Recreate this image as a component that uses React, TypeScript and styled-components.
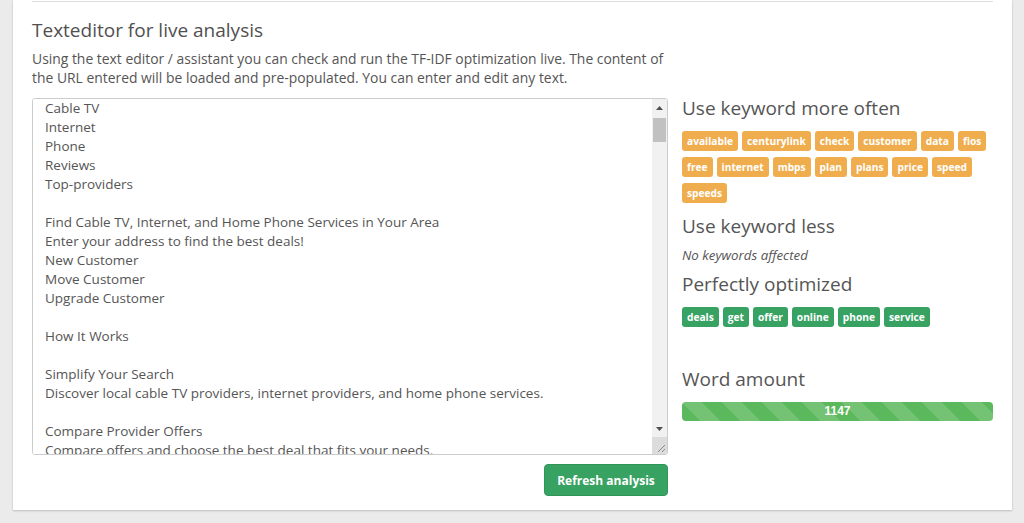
import React from 'react';
import styled, { createGlobalStyle } from 'styled-components';

const GlobalStyle = createGlobalStyle`
    html, body {
        margin: 0;
        padding: 0;
        background: #ebebeb;
        font-family: 'Open Sans', 'Noto Sans', sans-serif;
        color: #555;
    }
`;

const moreOften = ['available', 'centurylink', 'check', 'customer', 'data', 'fios', 'free', 'internet', 'mbps', 'plan', 'plans', 'price', 'speed', 'speeds'];
const optimized = ['deals', 'get', 'offer', 'online', 'phone', 'service'];

const baseText = [
    'Cable TV',
    'Internet',
    'Phone',
    'Reviews',
    'Top-providers',
    '',
    'Find Cable TV, Internet, and Home Phone Services in Your Area',
    'Enter your address to find the best deals!',
    'New Customer',
    'Move Customer',
    'Upgrade Customer',
    '',
    'How It Works',
    '',
    'Simplify Your Search',
    'Discover local cable TV providers, internet providers, and home phone services.',
    '',
    'Compare Provider Offers',
    'Compare offers and choose the best deal that fits your needs.',
    '',
    'Get Connected',
    'Order online or call to get your new service installed.',
    '',
];

const extra: string[] = [];
for (let i = 0; i < 10; i++) {
    extra.push(
        'Popular Internet Plans',
        'CenturyLink Internet - speeds up to 100 Mbps',
        'Fios Internet - plans with no data caps',
        'Check availability at your address',
        'Free installation for new customers',
        '',
        'Frequently Asked Questions',
        'What is the best internet plan for me?',
        'Compare price and speed of available plans.',
        'How do I check which providers offer service in my area?',
        'Enter your zip code and see every available offer online.',
        '',
        'Customer Reviews',
        'Read real reviews from customers in your neighborhood.',
        'Phone service bundles and deals',
        '',
        '',
    );
}

const editorText = [...baseText, ...extra].join('\n');

const Arrow = ({ dir }: { dir: 'up' | 'down' }) => (
    <svg width='7' height='4' viewBox='0 0 7 4'>
        {dir === 'up' ? <polygon points='3.5,0 7,4 0,4' fill='#505050' /> : <polygon points='0,0 7,0 3.5,4' fill='#505050' />}
    </svg>
);

const Grip = () => (
    <svg width='10' height='10' viewBox='0 0 10 10'>
        <line x1='9' y1='2' x2='2' y2='9' stroke='#8a8a8a' strokeWidth='1' />
        <line x1='9' y1='6' x2='6' y2='9' stroke='#8a8a8a' strokeWidth='1' />
    </svg>
);

const App = () => {
    return (
        <>
            <GlobalStyle />
            <Page>
                <Card>
                    <Rule />
                    <Grid>
                        <EditorColumn>
                            <Title>Texteditor for live analysis</Title>
                            <Intro>
                                Using the text editor / assistant you can check and run the TF-IDF optimization live. The content of
                                the URL entered will be loaded and pre-populated. You can enter and edit any text.
                            </Intro>
                            <EditorWrap>
                                <Editor defaultValue={editorText} spellCheck={false} />
                                <Scrollbar>
                                    <ScrollButton>
                                        <Arrow dir='up' />
                                    </ScrollButton>
                                    <ScrollTrack>
                                        <ScrollThumb />
                                    </ScrollTrack>
                                    <ScrollButton>
                                        <Arrow dir='down' />
                                    </ScrollButton>
                                    <ResizeCorner>
                                        <Grip />
                                    </ResizeCorner>
                                </Scrollbar>
                            </EditorWrap>
                            <ButtonRow>
                                <RefreshButton>Refresh analysis</RefreshButton>
                            </ButtonRow>
                        </EditorColumn>

                        <Sidebar>
                            <Section>
                                <SectionTitle>Use keyword more often</SectionTitle>
                                <Tags>
                                    {moreOften.map((k) => (
                                        <Tag key={k} $tone='warning'>{k}</Tag>
                                    ))}
                                </Tags>
                            </Section>
                            <Section>
                                <SectionTitle>Use keyword less</SectionTitle>
                                <Empty>No keywords affected</Empty>
                            </Section>
                            <Section>
                                <SectionTitle>Perfectly optimized</SectionTitle>
                                <Tags>
                                    {optimized.map((k) => (
                                        <Tag key={k} $tone='success'>{k}</Tag>
                                    ))}
                                </Tags>
                            </Section>
                            <WordSection>
                                <SectionTitle>Word amount</SectionTitle>
                                <Progress>
                                    <ProgressBar style={{ width: '100%' }}>1147</ProgressBar>
                                </Progress>
                            </WordSection>
                        </Sidebar>
                    </Grid>
                </Card>
            </Page>
        </>
    );
};

export default App;

const Page = styled.div`
    padding: 0 12px 13px 13px;
`;

const Card = styled.section`
    background: #fff;
    box-shadow: 0 1px 2px rgba(0, 0, 0, 0.18), 0 0 1px rgba(0, 0, 0, 0.12);
    padding: 1px 19px 14px 19px;
`;

const Rule = styled.div`
    height: 1px;
    background: #ddd;
`;

const Grid = styled.div`
    display: grid;
    grid-template-columns: 636px 311px;
    column-gap: 14px;
`;

const EditorColumn = styled.div`
    display: flex;
    flex-direction: column;
`;

const Title = styled.h2`
    margin: 16px 0 0 0;
    font-size: 19px;
    font-weight: 400;
    line-height: 24px;
    color: #505050;
`;

const Intro = styled.p`
    margin: 7px 0 11px 0;
    font-size: 13.9px;
    line-height: 19px;
    color: #555;
`;

const EditorWrap = styled.div`
    position: relative;
    width: 636px;
    height: 357px;
`;

const Editor = styled.textarea`
    box-sizing: border-box;
    display: block;
    width: 100%;
    height: 100%;
    margin: 0;
    padding: 0 27px 6px 12px;
    border: 1px solid #ccc;
    border-radius: 3px;
    font-family: 'Open Sans', 'Noto Sans', sans-serif;
    font-size: 13.5px;
    line-height: 19px;
    color: #555;
    overflow-y: scroll;
    scrollbar-width: none;
    resize: none;
    outline: none;
    &::-webkit-scrollbar {
        display: none;
    }
`;

const Scrollbar = styled.div`
    position: absolute;
    top: 1px;
    right: 1px;
    bottom: 1px;
    width: 15px;
    display: flex;
    flex-direction: column;
    background: #f1f1f1;
    border-radius: 0 2px 2px 0;
`;

const ScrollButton = styled.div`
    height: 17px;
    flex: none;
    display: flex;
    align-items: center;
    justify-content: center;
`;

const ScrollTrack = styled.div`
    flex: 1;
    padding: 2px 1px 0 1px;
`;

const ScrollThumb = styled.div`
    height: 24px;
    background: #c1c1c1;
`;

const ResizeCorner = styled.div`
    height: 17px;
    flex: none;
    background: #dcdcdc;
    display: flex;
    align-items: flex-end;
    justify-content: flex-end;
    padding: 0 1px 1px 0;
    box-sizing: border-box;
`;

const ButtonRow = styled.div`
    display: flex;
    justify-content: flex-end;
    margin-top: 9px;
`;

const RefreshButton = styled.button`
    height: 32px;
    width: 124px;
    border: 1px solid #31955a;
    border-radius: 4px;
    background: #37a262;
    color: #fff;
    font-family: 'Open Sans', 'Noto Sans', sans-serif;
    font-size: 12px;
    font-weight: 700;
    cursor: pointer;
`;

const Sidebar = styled.aside`
    display: flex;
    flex-direction: column;
    padding-top: 94px;
`;

const Section = styled.div`
    margin-bottom: 11px;
`;

const WordSection = styled.div`
    margin-top: 29px;
`;

const SectionTitle = styled.h3`
    margin: 0 0 11px 0;
    font-size: 19px;
    font-weight: 400;
    line-height: 24px;
    color: #555;
`;

const Tags = styled.div`
    display: flex;
    flex-wrap: wrap;
    gap: 6px 4px;
`;

const Tag = styled.span<{ $tone: 'warning' | 'success' }>`
    display: inline-flex;
    align-items: center;
    height: 20px;
    padding: 0 5px;
    border-radius: 3px;
    background: ${(p) => (p.$tone === 'warning' ? '#f0ad4e' : '#37a262')};
    color: #fff;
    font-size: 10.2px;
    font-weight: 700;
`;

const Empty = styled.p`
    margin: -3px 0 -4px 0;
    font-size: 13.3px;
    line-height: 19px;
    font-style: italic;
    color: #555;
`;

const Progress = styled.div`
    height: 19px;
    border-radius: 4px;
    background: #f5f5f5;
    overflow: hidden;
`;

const ProgressBar = styled.div`
    height: 100%;
    background-color: #5cb85c;
    background-image: linear-gradient(
        45deg,
        rgba(255, 255, 255, 0.15) 25%,
        transparent 25%,
        transparent 50%,
        rgba(255, 255, 255, 0.15) 50%,
        rgba(255, 255, 255, 0.15) 75%,
        transparent 75%,
        transparent
    );
    background-size: 40px 40px;
    color: #fff;
    font-family: 'Liberation Sans', Arial, sans-serif;
    font-size: 12px;
    font-weight: 700;
    line-height: 19px;
    text-align: center;
`;
